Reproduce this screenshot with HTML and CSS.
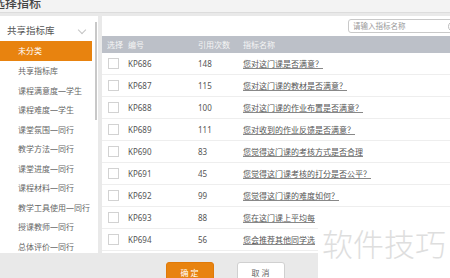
FILE: index.html
```html
<!DOCTYPE html>
<html lang="zh-CN">
<head>
    <meta charset="UTF-8">
    <title>选择指标</title>
    <link rel="stylesheet" href="styles.css">
</head>
<body>
    <div class="titlebar"><span class="title">选择指标</span></div>
    <div class="main">
        <div class="side">
            <div class="side-head">共享指标库 <span class="chev"></span></div>
            <ul class="side-list">
                <li class="active">未分类</li>
                <li>共享指标库</li>
                <li>课程满意度—学生</li>
                <li>课程难度—学生</li>
                <li>课堂氛围—同行</li>
                <li>教学方法—同行</li>
                <li>课堂进度—同行</li>
                <li>课程材料—同行</li>
                <li>教学工具使用—同行</li>
                <li>授课教师—同行</li>
                <li>总体评价—同行</li>
            </ul>
            <div class="scroll"></div>
        </div>
        <div class="content">
            <div class="search">
                <div class="search-box">请输入指标名称<span class="search-icon"></span></div>
            </div>
            <table class="grid">
                <thead>
                    <tr><th class="c1">选择</th><th class="c2">编号</th><th class="c3">引用次数</th><th>指标名称</th></tr>
                </thead>
                <tbody id="rows"></tbody>
            </table>
        </div>
    </div>
    <div class="footer">
        <button class="btn ok">确 定</button>
        <button class="btn cancel">取 消</button>
    </div>
    <div class="watermark">软件技巧</div>

    <script>
        const items = [
            ["KP686", 148, "您对这门课是否满意？"],
            ["KP687", 115, "您对这门课的教材是否满意？"],
            ["KP688", 100, "您对这门课的作业布置是否满意？"],
            ["KP689", 111, "您对收到的作业反馈是否满意？"],
            ["KP690", 83, "您觉得这门课的考核方式是否合理"],
            ["KP691", 45, "您觉得这门课考核的打分是否公平？"],
            ["KP692", 99, "您觉得这门课的难度如何？"],
            ["KP693", 88, "您在这门课上平均每"],
            ["KP694", 56, "您会推荐其他同学选"]
        ];

        const tbody = document.getElementById("rows");
        items.forEach(function (it) {
            const tr = document.createElement("tr");
            tr.innerHTML = '<td class="c1"><span class="check"></span></td>' +
                '<td class="c2">' + it[0] + '</td>' +
                '<td class="c3">' + it[1] + '</td>' +
                '<td><a class="name">' + it[2] + '</a></td>';
            tbody.appendChild(tr);
        });
    </script>
</body>
</html>
```

FILE: styles.css
```css
body {
    margin: 0;
    width: 450px;
    height: 278px;
    overflow: hidden;
    background-color: #e9e9e9;
    font-family: "Noto Sans", "Noto Sans CJK SC", sans-serif;
    color: #666;
    position: relative;
}

.titlebar {
    height: 12px;
    background-color: #f3f3f3;
    border-bottom: 1px solid #dcdcdc;
    overflow: hidden;
}

.title {
    display: block;
    margin-left: -7px;
    margin-top: -3px;
    font-family: "Noto Sans CJK SC", sans-serif;
    font-weight: 500;
    font-size: 12px;
    line-height: 12px;
    color: #444;
}

.main {
    display: flex;
    gap: 4px;
    padding-top: 3px;
    height: 237px;
}

.side {
    position: relative;
    width: 98px;
    background-color: #fff;
    padding-top: 5px;
    box-sizing: border-box;
    overflow: hidden;
}

.side-head {
    height: 20px;
    line-height: 20px;
    padding-left: 7px;
    font-size: 9.5px;
    color: #555;
    position: relative;
}

.chev {
    position: absolute;
    left: 79px;
    top: 6px;
    width: 5px;
    height: 5px;
    border-right: 1px solid #c4c4c4;
    border-bottom: 1px solid #c4c4c4;
    transform: rotate(45deg);
}

.side-list {
    list-style: none;
    margin: 0;
    padding: 0;
}

.side-list li {
    height: 19.5px;
    line-height: 19.5px;
    padding-left: 18px;
    margin-right: 6px;
    font-size: 8px;
    color: #666;
    white-space: nowrap;
}

.side-list li.active {
    height: 20px;
    line-height: 20px;
    background-color: #e8830f;
    color: #fff;
}

.scroll {
    position: absolute;
    left: 95px;
    top: 6px;
    width: 2px;
    height: 98px;
    background-color: #c8c8c8;
}

.content {
    flex: 1;
    background-color: #fff;
    padding-top: 3px;
    overflow: hidden;
}

.search {
    display: flex;
    justify-content: flex-end;
    height: 14px;
    margin-bottom: 3px;
}

.search-box {
    position: relative;
    width: 112px;
    margin-right: -10px;
    height: 14px;
    box-sizing: border-box;
    border: 1px solid #c9c9c9;
    border-radius: 3px;
    padding-left: 4px;
    font-size: 7.5px;
    line-height: 12px;
    color: #999;
}

.search-icon {
    position: absolute;
    left: 99px;
    top: 1px;
    width: 9px;
    height: 9px;
    border: 1px solid #bbb;
    border-radius: 50%;
}

.grid {
    width: 100%;
    border-collapse: collapse;
    font-size: 8px;
}

.grid th {
    height: 17px;
    padding: 0 0 0 5px;
    background-color: #bcc0c8;
    color: #f5f5f5;
    font-weight: normal;
    text-align: left;
    white-space: nowrap;
}

.grid td {
    height: 21px;
    padding: 0 0 0 5px;
    border-bottom: 1px solid #eee;
    color: #555;
    white-space: nowrap;
}

.c1 {
    width: 16px;
}

.c2 {
    width: 65px;
}

.c3 {
    width: 40px;
}

.check {
    display: block;
    width: 9px;
    height: 9px;
    margin-left: 1px;
    border: 1px solid #d2d2d2;
}

.name {
    color: #555;
    text-decoration: underline;
    text-decoration-color: #888;
}

.footer {
    display: flex;
    justify-content: center;
    gap: 23px;
    padding-top: 9px;
}

.btn {
    width: 48px;
    height: 20px;
    border-radius: 3px;
    font-family: "Noto Sans CJK SC", sans-serif;
    font-size: 8px;
    padding: 0;
}

.btn.ok {
    background-color: #e8830f;
    border: 1px solid #e07a08;
    color: #fff;
}

.btn.cancel {
    background-color: #fff;
    border: 1px solid #d0d0d0;
    color: #666;
}

.watermark {
    position: absolute;
    left: 318px;
    top: 207px;
    width: 132px;
    height: 71px;
    background-color: #fff;
    padding-left: 4px;
    box-sizing: border-box;
    font-family: "Noto Sans CJK SC", sans-serif;
    font-weight: 300;
    font-size: 31px;
    line-height: 71px;
    color: #dedede;
    white-space: nowrap;
}
```
